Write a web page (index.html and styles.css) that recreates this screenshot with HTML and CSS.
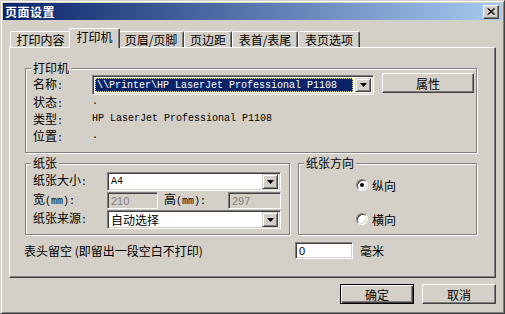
FILE: index.html
```html
<!DOCTYPE html>
<html lang="zh-CN">
<head>
  <meta charset="UTF-8" />
  <title>页面设置</title>
  <link rel="stylesheet" href="styles.css">
</head>
<body>
  <div class="window">
    <div class="titlebar">
      <span class="title">页面设置</span>
      <span class="close">
        <svg width="8" height="7" viewBox="0 0 8 7"><path d="M0.5 0.5 L7 6.5 M1.5 0.5 L8 6.5 M7 0.5 L0.5 6.5 M8 0.5 L1.5 6.5" stroke="#000" stroke-width="1" fill="none"/></svg>
      </span>
    </div>

    <div class="dialog">
      <div class="tabs">
        <div class="tab" style="width:61px">打印内容</div>
        <div class="tab active" style="width:51px">打印机</div>
        <div class="tab" style="width:66px">页眉/页脚</div>
        <div class="tab" style="width:48px">页边距</div>
        <div class="tab" style="width:66px">表首/表尾</div>
        <div class="tab" style="width:62px">表页选项</div>
      </div>

      <div class="panel">
        <fieldset class="group printer">
          <legend>打印机</legend>
          <div class="printer-grid">
            <span class="label">名称<span class="lat">:</span></span>
            <div class="name-row">
              <div class="combo printer-combo">
                <div class="combo-text selected"><span class="lat">\\Printer\HP LaserJet Professional P1108</span></div>
                <div class="drop"><svg width="7" height="4" viewBox="0 0 7 4"><path d="M0 0 H7 L3.5 4 Z" fill="#000"/></svg></div>
              </div>
              <button class="btn props">属性</button>
            </div>
            <span class="label">状态<span class="lat">:</span></span>
            <span class="value lat">.</span>
            <span class="label">类型<span class="lat">:</span></span>
            <span class="value lat">HP LaserJet Professional P1108</span>
            <span class="label">位置<span class="lat">:</span></span>
            <span class="value lat">.</span>
          </div>
        </fieldset>

        <div class="paper-row">
          <fieldset class="group paper">
            <legend>纸张</legend>
            <div class="paper-grid">
              <span class="label">纸张大小<span class="lat">:</span></span>
              <div class="combo">
                <div class="combo-text"><span class="lat">A4</span></div>
                <div class="drop"><svg width="7" height="4" viewBox="0 0 7 4"><path d="M0 0 H7 L3.5 4 Z" fill="#000"/></svg></div>
              </div>
              <span class="label">宽<span class="lat">(mm):</span></span>
              <div class="size-row">
                <div class="field disabled w-field">210</div>
                <span class="label h-label">高<span class="lat">(mm):</span></span>
                <div class="field disabled h-field">297</div>
              </div>
              <span class="label">纸张来源<span class="lat">:</span></span>
              <div class="combo">
                <div class="combo-text">自动选择</div>
                <div class="drop"><svg width="7" height="4" viewBox="0 0 7 4"><path d="M0 0 H7 L3.5 4 Z" fill="#000"/></svg></div>
              </div>
            </div>
          </fieldset>

          <fieldset class="group orient">
            <legend>纸张方向</legend>
            <div class="radio-row">
              <span class="radio checked"></span>
              <span>纵向</span>
            </div>
            <div class="radio-row second">
              <span class="radio"></span>
              <span>横向</span>
            </div>
          </fieldset>
        </div>

        <div class="margin-row">
          <span class="margin-label">表头留空 (即留出一段空白不打印)</span>
          <div class="field margin-field">0</div>
          <span class="unit">毫米</span>
        </div>
      </div>

      <div class="actions">
        <button class="btn default">确定</button>
        <button class="btn">取消</button>
      </div>
    </div>
  </div>
</body>
</html>
```

FILE: styles.css
```css
* {
  box-sizing: border-box;
}

body {
  margin: 0;
  background: #d4d0c8;
  font-family: "Noto Sans CJK SC", sans-serif;
  font-size: 12px;
  color: #000;
}

.lat {
  font-family: "Liberation Mono", monospace;
  font-size: 10px;
}

.window {
  width: 505px;
  height: 314px;
  background: #d4d0c8;
  border: 1px solid;
  border-color: #d4d0c8 #404040 #404040 #d4d0c8;
  box-shadow: inset 1px 1px #fff, inset -1px -1px #808080;
  padding: 2px;
}

.titlebar {
  height: 17px;
  display: flex;
  align-items: center;
  justify-content: space-between;
  padding: 0 3px 0 2px;
  background: linear-gradient(to right, #0a246a, #a6caf0);
}

.title {
  color: #fff;
  font-weight: bold;
  letter-spacing: 0.5px;
  line-height: 17px;
}

.close {
  width: 16px;
  height: 14px;
  background: #d4d0c8;
  border: 1px solid;
  border-color: #fff #404040 #404040 #fff;
  box-shadow: inset -1px -1px #808080;
  display: flex;
  align-items: center;
  justify-content: center;
}

.close svg {
  display: block;
}

.dialog {
  padding: 8px 6px 0 6px;
}

/* tab strip */
.tabs {
  display: flex;
  align-items: flex-end;
  height: 19px;
  padding-left: 1px;
}

.tab {
  height: 16px;
  line-height: 15px;
  text-align: center;
  white-space: nowrap;
  border: 1px solid;
  border-bottom: 0;
  border-color: #fff #404040 transparent #fff;
  border-radius: 2px 2px 0 0;
  box-shadow: inset -1px 0 #808080;
}

.tab.active {
  height: 20px;
  line-height: 16px;
  margin: 0 -2px -1px;
  position: relative;
  z-index: 1;
  background: #d4d0c8;
}

.panel {
  width: 487px;
  height: 231px;
  border: 1px solid;
  border-color: #fff #404040 #404040 #fff;
  box-shadow: inset -1px -1px #808080;
  padding: 13px 0 0 15px;
}

/* etched group boxes */
.group {
  margin: 0;
  min-width: 0;
  border: 1px solid #808080;
  box-shadow: 1px 1px #fff, inset 1px 1px #fff;
}

.group legend {
  padding: 0 2px;
  margin-left: -2px;
  line-height: 14px;
  background: #d4d0c8;
}

.printer {
  width: 452px;
  padding: 0 0 6px 7px;
}

.printer-grid {
  display: grid;
  grid-template-columns: 59px 1fr;
  grid-template-rows: 20px;
  grid-auto-rows: 17px;
}

.label {
  line-height: 14px;
  white-space: nowrap;
}

.printer-grid .label:first-child {
  align-self: center;
}

.value {
  line-height: 14px;
}

.name-row {
  display: flex;
  align-items: flex-start;
}

.combo {
  display: flex;
  height: 19px;
  background: #fff;
  border: 1px solid;
  border-color: #808080 #fff #fff #808080;
  box-shadow: inset 1px 1px #404040, inset -1px -1px #d4d0c8;
  padding: 1px 2px 1px 1px;
}

.printer-combo {
  width: 282px;
  height: 20px;
  padding: 2px;
}

.combo-text {
  flex: 1;
  display: flex;
  align-items: center;
  padding-left: 2px;
  overflow: hidden;
  white-space: nowrap;
}

.combo-text.selected {
  background: #0a246a;
  color: #fff;
  outline: 1px dotted #e8e070;
  outline-offset: -1px;
  margin-right: 2px;
}

.drop {
  width: 16px;
  background: #d4d0c8;
  border: 1px solid;
  border-color: #d4d0c8 #404040 #404040 #d4d0c8;
  box-shadow: inset 1px 1px #fff, inset -1px -1px #808080;
  display: flex;
  align-items: center;
  justify-content: center;
}

.drop svg {
  display: block;
}

.btn {
  font: inherit;
  color: #000;
  background: #d4d0c8;
  border: 1px solid;
  border-color: #fff #404040 #404040 #fff;
  box-shadow: inset -1px -1px #808080;
  padding: 0;
  height: 20px;
}

.props {
  width: 92px;
  margin: -2px 0 0 8px;
}

.btn.default {
  border-color: #000;
  box-shadow: inset 1px 1px #fff, inset -1px -1px #404040, inset -2px -2px #808080;
}

/* paper + orientation */
.paper-row {
  display: flex;
  gap: 8px;
  margin-top: 3px;
}

.paper {
  width: 265px;
  padding: 2px 8px 5px 7px;
}

.paper-grid {
  display: grid;
  grid-template-columns: 74px 1fr;
  grid-template-rows: 19px 17px 19px;
  row-gap: 1px;
  align-items: center;
}

.size-row {
  display: flex;
  align-items: center;
}

.field {
  height: 17px;
  background: #fff;
  border: 1px solid;
  border-color: #808080 #fff #fff #808080;
  box-shadow: inset 1px 1px #404040, inset -1px -1px #d4d0c8;
  padding: 0 3px;
  display: flex;
  align-items: center;
  font-family: "Liberation Sans", sans-serif;
  font-size: 11px;
}

.field.disabled {
  background: #d4d0c8;
  color: #808080;
}

.w-field {
  width: 51px;
}

.h-label {
  margin-left: 6px;
}

.h-field {
  width: 53px;
  margin-left: auto;
}

.orient {
  width: 179px;
  padding: 8px 0 0 7px;
}

.radio-row {
  display: flex;
  align-items: center;
  gap: 4px;
  height: 14px;
  margin-left: 50px;
}

.radio-row.second {
  margin-top: 20px;
}

.radio {
  width: 12px;
  height: 12px;
  border-radius: 50%;
  background: #fff;
  border: 1px solid;
  border-color: #808080 #fff #fff #808080;
  box-shadow: inset 1px 1px #404040, inset -1px -1px #d4d0c8;
  display: flex;
  align-items: center;
  justify-content: center;
}

.radio.checked::after {
  content: "";
  width: 4px;
  height: 4px;
  border-radius: 50%;
  background: #000;
}

.margin-row {
  display: flex;
  align-items: center;
  margin: 7px 0 0 -1px;
}

.margin-label {
  width: 271px;
}

.margin-field {
  width: 58px;
}

.unit {
  margin-left: 7px;
}

.actions {
  display: flex;
  justify-content: flex-end;
  gap: 8px;
  margin-top: 6px;
}

.actions .btn {
  width: 74px;
}
```
